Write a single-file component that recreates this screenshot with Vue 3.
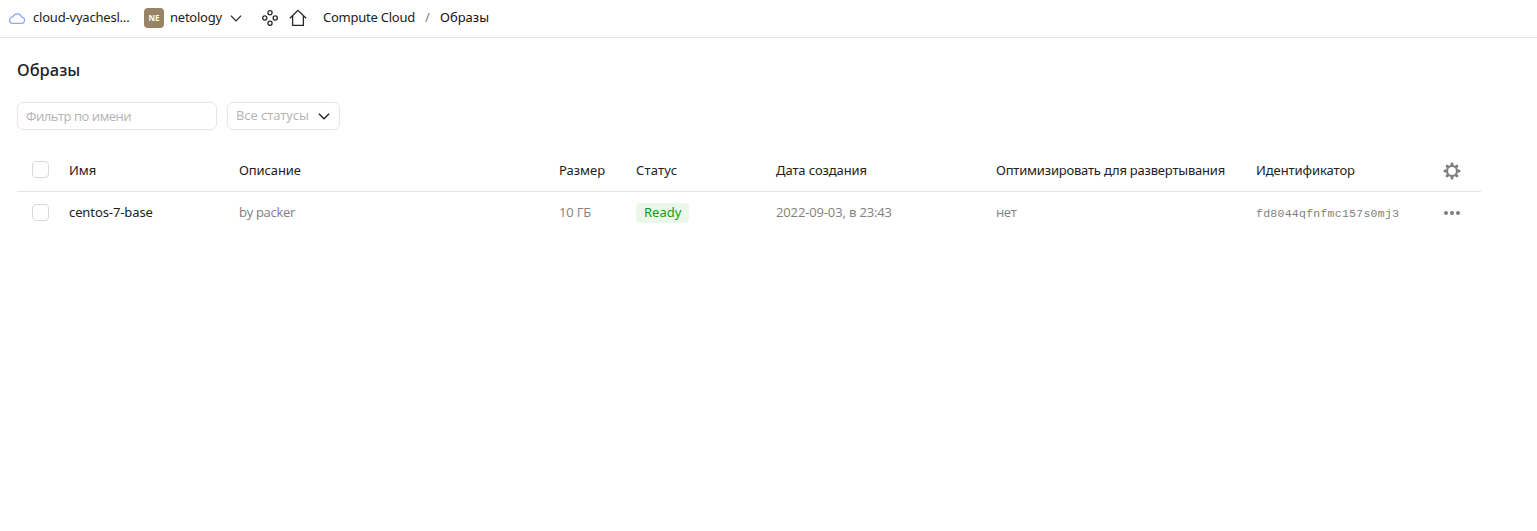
<script setup>
const columns = [
  { id: 'name', title: 'Имя' },
  { id: 'desc', title: 'Описание' },
  { id: 'size', title: 'Размер' },
  { id: 'status', title: 'Статус' },
  { id: 'date', title: 'Дата создания' },
  { id: 'opt', title: 'Оптимизировать для развертывания' },
  { id: 'ident', title: 'Идентификатор' },
]
const images = [
  {
    name: 'centos-7-base',
    desc: 'by packer',
    size: '10 ГБ',
    status: 'Ready',
    date: '2022-09-03, в 23:43',
    opt: 'нет',
    ident: 'fd8044qfnfmc157s0mj3',
  },
]
const teeth = [0, 45, 90, 135, 180, 225, 270, 315]
</script>

<template>
  <div class="page">
    <header class="topbar">
      <svg class="cloud" width="16" height="12" viewBox="0 0 16 12" fill="none" stroke="#89a6fc" stroke-width="1.3">
        <path d="M3.8 11.3h8.4a3.1 3.1 0 0 0 .5-6.2A4.7 4.7 0 0 0 3.8 4.9a3.2 3.2 0 0 0 0 6.4z" />
      </svg>
      <span class="cloud-name">cloud-vyachesl...</span>
      <span class="avatar">NE</span>
      <span class="folder">netology</span>
      <svg class="folder-arrow" width="12" height="8" viewBox="0 0 12 8" fill="none" stroke="#222" stroke-width="1.2">
        <path d="M.9 1.7 6 6.8l5.1-5.1" />
      </svg>
      <svg class="services" width="16" height="16" viewBox="0 0 16 16" fill="none" stroke="#262626" stroke-width="1.3">
        <circle cx="8" cy="2.8" r="2.1" />
        <circle cx="2.8" cy="8" r="2.1" />
        <circle cx="13.2" cy="8" r="2.1" />
        <circle cx="8" cy="13.2" r="2.1" />
      </svg>
      <svg class="home" width="18" height="18" viewBox="0 0 18 18" fill="none" stroke="#262626" stroke-width="1.3">
        <path d="M.9 9.3 9 1.4l8.1 7.9M3.6 7v9.4h10.8V7" />
      </svg>
      <span class="crumb">Compute Cloud</span>
      <span class="slash">/</span>
      <span class="crumb-current">Образы</span>
    </header>

    <main class="content">
      <h1>Образы</h1>
      <div class="filters">
        <div class="input"><span>Фильтр по имени</span></div>
        <div class="select">
          <span>Все статусы</span>
          <svg width="12" height="8" viewBox="0 0 12 8" fill="none" stroke="#222" stroke-width="1.3">
            <path d="M.9 1.7 6 6.8l5.1-5.1" />
          </svg>
        </div>
      </div>

      <div class="table">
        <div class="row head">
          <i class="checkbox"></i>
          <span v-for="c in columns" :key="c.id" :class="'h-' + c.id">{{ c.title }}</span>
          <svg class="gear" width="18" height="18" viewBox="-9 -9 18 18">
            <circle r="4.9" fill="none" stroke="#7f7f7f" stroke-width="2" />
            <path v-for="a in teeth" :key="a" :transform="`rotate(${a})`" d="M-1.9-5.2-.9-8.4H.9L1.9-5.2z" fill="#7f7f7f" />
          </svg>
        </div>
        <div v-for="img in images" :key="img.ident" class="row">
          <i class="checkbox"></i>
          <span class="name">{{ img.name }}</span>
          <span class="desc">{{ img.desc }}</span>
          <span class="size">{{ img.size }}</span>
          <span class="status"><b class="badge">{{ img.status }}</b></span>
          <span class="date">{{ img.date }}</span>
          <span class="opt">{{ img.opt }}</span>
          <span class="ident">{{ img.ident }}</span>
          <svg class="dots" width="18" height="6" viewBox="0 0 18 6" fill="#7f7f7f">
            <circle cx="3" cy="3" r="2" />
            <circle cx="9" cy="3" r="2" />
            <circle cx="15" cy="3" r="2" />
          </svg>
        </div>
      </div>
    </main>
  </div>
</template>

<style>
body {
  margin: 0;
  background: #fff;
}
</style>

<style scoped>
.page {
  height: 531px;
  overflow: hidden;
  background: #fff;
  color: #222;
  font: 13px/18px "Noto Sans", "Open Sans", sans-serif;
  white-space: nowrap;
}
.topbar {
  display: flex;
  align-items: center;
  height: 38px;
  padding: 0 9px 1px;
  box-sizing: border-box;
  border-bottom: 1px solid #e5e5e5;
}
.topbar svg {
  flex: none;
}
.cloud-name,
.folder,
.crumb,
.slash,
.crumb-current {
  padding-bottom: 2px;
}
.cloud-name {
  width: 103px;
  margin-left: 8px;
  letter-spacing: -0.2px;
}
.avatar {
  width: 20px;
  height: 20px;
  margin-left: 8px;
  border-radius: 4px;
  background: #998366;
  color: #fff;
  font: bold 8px/20px "Noto Sans", sans-serif;
  text-align: center;
}
.folder {
  width: 54px;
  margin-left: 6px;
  letter-spacing: -0.24px;
}
.folder-arrow {
  margin-left: 6px;
}
.services {
  margin-left: 20px;
}
.home {
  margin-left: 11px;
}
.crumb {
  width: 93px;
  margin-left: 16px;
  letter-spacing: -0.24px;
}
.slash {
  width: 7px;
  margin-left: 9px;
  color: #808080;
}
.crumb-current {
  margin-left: 8px;
  color: #111;
}
.content {
  width: 1464px;
  margin-left: 17px;
}
h1 {
  margin: 0;
  padding-top: 20px;
  font: 500 16.5px/24px "Noto Sans", sans-serif;
}
.filters {
  display: flex;
  gap: 10px;
  margin-top: 20px;
  color: #b3b3b3;
  font-family: "Open Sans", "Noto Sans", sans-serif;
}
.input,
.select {
  box-sizing: border-box;
  height: 28px;
  padding: 0 8px;
  border: 1px solid #e5e5e5;
  border-radius: 6px;
}
.input {
  width: 200px;
  line-height: 26px;
  letter-spacing: -0.46px;
}
.select {
  display: flex;
  align-items: center;
  justify-content: space-between;
  width: 113px;
  padding-right: 9px;
}
.select span {
  padding-bottom: 2px;
  line-height: 24px;
  letter-spacing: -0.08px;
}
.table {
  margin-top: 19px;
}
.row {
  display: grid;
  grid-template-columns: 52px 170px 320px 77px 140px 220px 260px 188px 1fr;
  align-items: center;
  height: 42px;
  color: #808080;
  font-family: "Open Sans", "Noto Sans", sans-serif;
}
.head {
  box-sizing: border-box;
  height: 43px;
  border-bottom: 1px solid #e5e5e5;
  color: #222;
  font-family: "Noto Sans", "Open Sans", sans-serif;
}
.checkbox {
  box-sizing: border-box;
  width: 17px;
  height: 17px;
  margin: 0 0 2px 15px;
  border: 1px solid #d9d9d9;
  border-radius: 4px;
}
.h-desc,
.h-date {
  letter-spacing: -0.1px;
}
.h-status {
  letter-spacing: 0.2px;
}
.h-opt {
  letter-spacing: -0.2px;
}
.h-ident {
  letter-spacing: -0.08px;
}
.name,
.desc,
.size,
.date,
.opt {
  padding-bottom: 2px;
}
.name {
  color: #222;
  font-family: "Noto Sans", sans-serif;
  letter-spacing: -0.1px;
}
.desc {
  letter-spacing: -0.3px;
}
.size {
  letter-spacing: -0.2px;
}
.badge {
  display: inline-block;
  height: 20px;
  padding: 0 8px;
  border-radius: 4px;
  background: #e9f8e9;
  color: #0f9d0f;
  font: 13px/19px "Noto Sans", sans-serif;
}
.date {
  letter-spacing: -0.14px;
}
.opt {
  letter-spacing: -0.4px;
}
.ident {
  padding-top: 2px;
  font: 11.5px/18px "Liberation Mono", monospace;
  letter-spacing: 0.26px;
}
.gear {
  margin: 1px 0 0 -1px;
}
.dots {
  margin-left: -1px;
}
</style>
